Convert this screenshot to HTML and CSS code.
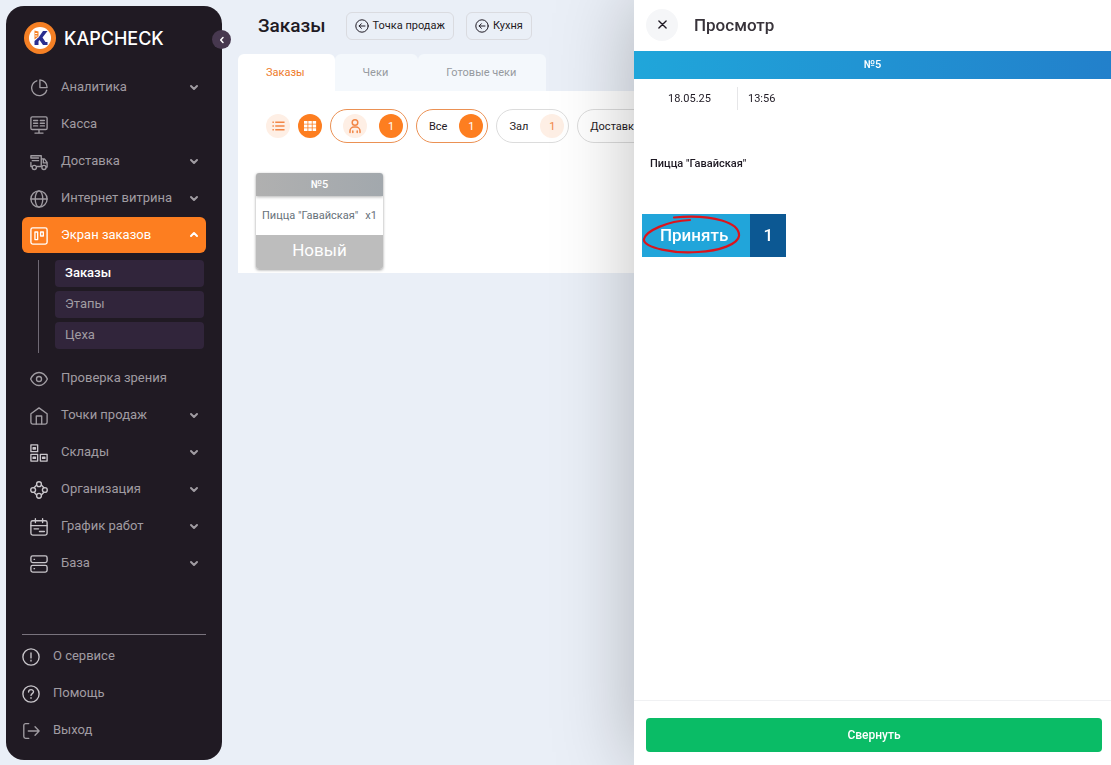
FILE: index.html
```html
<!DOCTYPE html>
<html lang="ru">
<head>
    <meta charset="UTF-8">
    <meta name="viewport" content="width=device-width, initial-scale=1.0">
    <title>Заказы - KAPCHECK</title>
    <link rel="stylesheet" href="styles.css">
</head>
<body>
    <svg class="sprite" aria-hidden="true">
        <symbol id="chevron" viewBox="0 0 10 10"><path d="M2 4l3 3 3-3"/></symbol>
        <symbol id="back" viewBox="0 0 14 14"><circle cx="7" cy="7" r="6.2"/><path d="M10 7H4.2M6.4 4.7L4.1 7l2.3 2.3"/></symbol>
    </svg>

    <div class="layout">
        <aside class="sidebar">
            <a class="logo" href="#">
                <svg class="logo-mark" viewBox="0 0 32 32">
                    <circle cx="16" cy="16" r="16" fill="#f58025"/>
                    <circle cx="16" cy="16" r="11" fill="#fff"/>
                    <path d="M10.500 8.500l4 1v5l-4 3z" fill="#f58025"/>
                    <path d="M11.500 11.500h1.500M11.500 14h1.500" stroke="#fff" stroke-width="1"/>
                    <path d="M10.500 19l4-3.500V23h-4z" fill="#2b2f8f"/>
                    <path d="M13.500 17l5.500-8h4.500l-5 6.500 3 4.500h2v3h-4.500l-3.500-5-2 2z" fill="#2b2f8f"/>
                </svg>
                <span>KAPCHECK</span>
            </a>
            <button class="collapse" type="button" aria-label="Свернуть меню">
                <svg viewBox="0 0 10 10"><path d="M6 2.500L3.700 5 6 7.500"/></svg>
            </button>

            <nav class="menu">
                <a class="menu-item" href="#">
                    <svg class="icon" viewBox="0 0 20 20"><path d="M7.500 2A8.500 8.500 0 1 0 18.500 12.500"/><path d="M11 1v8.500h8A8.500 8.500 0 0 0 11 1z"/></svg>
                    <span>Аналитика</span>
                    <svg class="chevron"><use href="#chevron"/></svg>
                </a>
                <a class="menu-item" href="#">
                    <svg class="icon" viewBox="0 0 20 20"><rect x="1" y="1" width="18" height="14" rx="1.500"/><path d="M10 15v3.500M5.500 19h9M4 5h4.500M4 8h4.500M4 11h4.500M11.500 5H16M11.500 8H16M11.500 11H16"/></svg>
                    <span>Касса</span>
                </a>
                <a class="menu-item" href="#">
                    <svg class="icon" viewBox="0 0 20 20"><path d="M1 5.500V3h11.500v12H7.500M1 10.500v4.500h1.500M12.500 6.500H16l3 4V15.500h-1M1 5.500h8.500M2.500 8.500h7M14.800 7v4H19"/><circle cx="4.800" cy="16" r="2.300"/><circle cx="15.500" cy="16" r="2.300"/></svg>
                    <span>Доставка</span>
                    <svg class="chevron"><use href="#chevron"/></svg>
                </a>
                <a class="menu-item" href="#">
                    <svg class="icon" viewBox="0 0 20 20"><circle cx="10" cy="10" r="9"/><ellipse cx="10" cy="10" rx="4.200" ry="9"/><path d="M1 10h18"/></svg>
                    <span>Интернет витрина</span>
                    <svg class="chevron"><use href="#chevron"/></svg>
                </a>
                <a class="menu-item active" href="#">
                    <svg class="icon" viewBox="0 0 20 20"><rect x="1" y="1" width="18" height="18" rx="2"/><rect x="5.500" y="5.500" width="3" height="8.500"/><rect x="11.800" y="5.500" width="3" height="4.500"/></svg>
                    <span>Экран заказов</span>
                    <svg class="chevron"><use href="#chevron"/></svg>
                </a>
                <div class="submenu">
                    <a class="current" href="#">Заказы</a>
                    <a href="#">Этапы</a>
                    <a href="#">Цеха</a>
                </div>
                <a class="menu-item" href="#">
                    <svg class="icon" viewBox="0 0 20 20"><path d="M.7 10C3 5 6.300 2.800 10 2.800s7 2.200 9.300 7.200c-2.300 5-5.600 7.200-9.300 7.200S3 15 .7 10z"/><circle cx="10" cy="10" r="2.800"/></svg>
                    <span>Проверка зрения</span>
                </a>
                <a class="menu-item" href="#">
                    <svg class="icon" viewBox="0 0 20 20"><path d="M1 7.500L10 1l9 6.500V17a2 2 0 0 1-2 2H3a2 2 0 0 1-2-2z"/><path d="M7 19v-9h6v9"/></svg>
                    <span>Точки продаж</span>
                    <svg class="chevron"><use href="#chevron"/></svg>
                </a>
                <a class="menu-item bright" href="#">
                    <svg class="icon" viewBox="0 0 20 20"><path d="M1 1h7.500v7.500H1zM1 11.500h7.500V19H1zM11.500 11.500H19V19h-7.500z"/><path d="M3.500 4h2.500v1.500H3.500zM3.500 14.500h2.500V16H3.500zM14 14.500h2.500V16H14z"/></svg>
                    <span>Склады</span>
                    <svg class="chevron"><use href="#chevron"/></svg>
                </a>
                <a class="menu-item bright" href="#">
                    <svg class="icon" viewBox="0 0 20 20"><circle cx="10" cy="3.500" r="2.700"/><circle cx="3.500" cy="10" r="2.700"/><circle cx="16.500" cy="10" r="2.700"/><circle cx="10" cy="16.500" r="2.700"/><path d="M7.400 4.500L4.500 7.400M12.600 4.500l2.900 2.900M7.400 15.500l-2.900-2.900M12.600 15.500l2.900-2.900"/></svg>
                    <span>Организация</span>
                    <svg class="chevron"><use href="#chevron"/></svg>
                </a>
                <a class="menu-item bright" href="#">
                    <svg class="icon" viewBox="0 0 20 20"><rect x="1" y="3" width="18" height="16" rx="2"/><path d="M1 8.500h18M6 .8v4.200M14 .8v4.200M4.500 12h5M10.500 15H16"/></svg>
                    <span>График работ</span>
                    <svg class="chevron"><use href="#chevron"/></svg>
                </a>
                <a class="menu-item bright" href="#">
                    <svg class="icon" viewBox="0 0 20 20"><rect x="1" y="1" width="18" height="7.500" rx="2"/><rect x="1" y="11.500" width="18" height="7.500" rx="2"/><path d="M4.500 4.800H5M4.500 15.200H5"/></svg>
                    <span>База</span>
                    <svg class="chevron"><use href="#chevron"/></svg>
                </a>
            </nav>

            <div class="menu-bottom">
                <a class="menu-item bright" href="#">
                    <svg class="icon" viewBox="0 0 20 20"><circle cx="10" cy="10" r="9"/><path d="M10 5.500v5.500M10 13.500v1"/></svg>
                    <span>О сервисе</span>
                </a>
                <a class="menu-item bright" href="#">
                    <svg class="icon" viewBox="0 0 20 20"><circle cx="10" cy="10" r="9"/><path d="M7.300 7.800c0-3.700 5.600-3.500 5.500-.2 0 2-2.800 2-2.800 4M10 14v.8"/></svg>
                    <span>Помощь</span>
                </a>
                <a class="menu-item" href="#">
                    <svg class="icon" viewBox="0 0 20 20"><path d="M7.500 1.800H4a2 2 0 0 0-2 2v12.400a2 2 0 0 0 2 2h3.500M7 10h12M14.500 5.300L19 10l-4.500 4.700"/></svg>
                    <span>Выход</span>
                </a>
            </div>
        </aside>

        <main class="content">
            <header class="page-header">
                <h1>Заказы</h1>
                <button class="btn-outline" type="button"><svg><use href="#back"/></svg>Точка продаж</button>
                <button class="btn-outline" type="button"><svg><use href="#back"/></svg>Кухня</button>
            </header>

            <div class="tabs">
                <button class="tab tab-active" type="button">Заказы</button>
                <button class="tab" type="button">Чеки</button>
                <button class="tab" type="button">Готовые чеки</button>
            </div>

            <section class="orders">
                <div class="filters">
                    <button class="round" type="button" aria-label="Список">
                        <svg class="lines" viewBox="0 0 14 14"><path d="M.5 3H2M.5 7H2M.5 11H2M3.500 3h10M3.500 7h10M3.500 11h10"/></svg>
                    </button>
                    <button class="round round-active" type="button" aria-label="Плитка">
                        <svg class="filled" viewBox="0 0 14 14"><path d="M1 2h3.500v2.800H1zM5.300 2h3.500v2.800H5.300zM9.600 2h3.500v2.800H9.600zM1 5.600h3.500v2.800H1zM5.300 5.600h3.500v2.800H5.300zM9.600 5.600h3.500v2.800H9.600zM1 9.200h3.500V12H1zM5.300 9.200h3.500V12H5.300zM9.600 9.200h3.500V12H9.600z"/></svg>
                    </button>
                    <button class="pill pill-active" type="button" aria-label="Мои заказы">
                        <span class="round">
                            <svg viewBox="0 0 14 16"><circle cx="7" cy="4.500" r="2.800"/><path d="M2 14.500V13a4 4 0 0 1 4-4h2a4 4 0 0 1 4 4v1.500M4.800 14.500V13M9.200 14.500V13"/></svg>
                        </span>
                        <span class="count">1</span>
                    </button>
                    <button class="pill pill-active" type="button">Все<span class="count">1</span></button>
                    <button class="pill" type="button">Зал<span class="count">1</span></button>
                    <button class="pill" type="button">Доставка<span class="count">1</span></button>
                </div>

                <article class="order-card">
                    <h2>№5</h2>
                    <p><span>Пицца "Гавайская"</span><span>x1</span></p>
                    <div class="order-status">Новый</div>
                </article>
            </section>
        </main>
    </div>

    <section class="drawer">
        <header class="drawer-header">
            <button class="close" type="button" aria-label="Закрыть">
                <svg viewBox="0 0 10 10"><path d="M1 1l8 8M9 1L1 9"/></svg>
            </button>
            <h2>Просмотр</h2>
        </header>
        <div class="drawer-number">№5</div>
        <div class="drawer-date">
            <span>18.05.25</span>
            <time>13:56</time>
        </div>
        <p class="drawer-item">Пицца "Гавайская"</p>
        <div class="actions">
            <button class="accept" type="button">Принять</button>
            <span class="amount">1</span>
            <!-- hand-drawn highlight around the accept button -->
            <svg class="highlight" viewBox="0 0 100 42" aria-hidden="true">
                <path d="M48 6C25 7 4 17 2 25c-2 9 32 15 54 13 22-1 40-8 41-16C98 9 72 0 32 3.500"/>
            </svg>
        </div>
        <footer class="drawer-footer">
            <button class="submit" type="button">Свернуть</button>
        </footer>
    </section>
</body>
</html>
```
FILE: styles.css
```css
* {
    box-sizing: border-box;
}

body {
    font-family: Roboto, "Noto Sans", sans-serif;
    font-size: 11px;
    color: #1f1a24;
    background-color: #eaeff7;
    margin: 0;
    height: 100vh;
    overflow: hidden;
}

h1,
h2,
p {
    margin: 0;
}

a {
    color: inherit;
    text-decoration: none;
}

button {
    font: inherit;
    color: inherit;
    border: none;
    background: none;
    padding: 0;
    cursor: pointer;
}

svg {
    display: block;
    flex: none;
    fill: none;
    stroke: currentColor;
    stroke-width: 1.5;
    stroke-linecap: round;
    stroke-linejoin: round;
}

.sprite {
    position: absolute;
    width: 0;
    height: 0;
}

.layout {
    display: flex;
    height: 100%;
}

/* Sidebar */
.sidebar {
    position: relative;
    display: flex;
    flex-direction: column;
    flex: none;
    width: 216px;
    margin: 6px 0 5px 6px;
    padding: 16px 16px 12px;
    border-radius: 18px;
    background-color: #201a23;
    color: #a09ca2;
}

.logo {
    display: flex;
    align-items: center;
    gap: 8px;
    padding-left: 2px;
    color: #fff;
    font-family: Inter, sans-serif;
    font-size: 18px;
    font-weight: 500;
}

.logo-mark {
    width: 32px;
    height: 32px;
    stroke: none;
}

.collapse {
    position: absolute;
    top: 24px;
    right: -9px;
    display: grid;
    place-items: center;
    width: 19px;
    height: 19px;
    border-radius: 50%;
    background-color: #47384f;
    color: #fff;
}

.collapse svg {
    width: 10px;
    height: 10px;
}

.menu {
    display: flex;
    flex-direction: column;
    gap: 1px;
    margin-top: 15px;
}

.menu-item {
    display: flex;
    align-items: center;
    gap: 13px;
    height: 36px;
    padding: 0 7px 0 8px;
    border-radius: 6px;
    font-size: 13px;
}

.menu-item span {
    flex: 1;
    padding-bottom: 1px;
}

.icon {
    width: 18px;
    height: 18px;
    margin-top: 2px;
}

.bright .icon {
    color: #c9c6cb;
}

.chevron {
    width: 10px;
    height: 10px;
    stroke-width: 2;
}

.active {
    background-color: #fd7e20;
    color: #fff;
}

.active .chevron {
    transform: rotate(180deg);
}

.submenu {
    display: flex;
    flex-direction: column;
    gap: 4px;
    margin: 6px 2px 6px 16px;
    padding: 0 0 4px 16px;
    border-left: 1px solid #6f6974;
}

.submenu a {
    height: 27px;
    padding-left: 10px;
    border-radius: 4px;
    background-color: #31253b;
    font-size: 13px;
    line-height: 26px;
}

.submenu .current {
    color: #fff;
    font-weight: 500;
}

.menu-bottom {
    display: flex;
    flex-direction: column;
    gap: 1px;
    margin-top: auto;
    padding-top: 3px;
    border-top: 1px solid #79737d;
}

.menu-bottom .menu-item {
    padding-left: 0;
}

/* Page */
.content {
    flex: 1;
    min-width: 0;
    padding: 12px 16px 0;
}

.page-header {
    display: flex;
    align-items: center;
    gap: 12px;
    padding-left: 20px;
}

.page-header h1 {
    margin-right: 8px;
    padding-bottom: 1px;
    font-size: 19px;
    font-weight: 500;
}

.btn-outline {
    display: flex;
    align-items: center;
    gap: 4px;
    height: 28px;
    padding: 0 8px 1px;
    border: 1px solid #dadbe0;
    border-radius: 6px;
}

.btn-outline svg {
    width: 14px;
    height: 14px;
    stroke-width: 1;
}

.tabs {
    display: flex;
    margin-top: 14px;
}

.tab {
    height: 37px;
    padding: 0 30px 0 28px;
    border-radius: 6px 6px 0 0;
    background-color: #f4f8fc;
    color: #969a9f;
}

.tab-active {
    background-color: #fff;
    color: #ee7a2b;
}

.orders {
    padding: 18px 18px 4px;
    background-color: #fff;
}

.filters {
    display: flex;
    align-items: center;
    gap: 8px;
    padding-left: 10px;
    overflow: hidden;
}

.round,
.count {
    display: grid;
    place-items: center;
    flex: none;
    width: 24px;
    height: 24px;
    border-radius: 50%;
    background-color: #feefe5;
    color: #f28646;
}

.round svg {
    width: 14px;
    height: 16px;
}

.round .lines {
    width: 13px;
    stroke-linecap: butt;
}

.round .filled {
    fill: currentColor;
    stroke: none;
}

.round-active,
.pill-active .count {
    background-color: #fd7e20;
    color: #fff;
}

.pill {
    display: flex;
    align-items: center;
    gap: 12px;
    height: 34px;
    padding: 0 4px 0 12px;
    border: 1px solid #dcdcdc;
    border-radius: 17px;
}

.pill-active {
    border-color: #eb9154;
}

.order-card {
    width: 127px;
    margin-top: 30px;
    border-radius: 3px;
    background-color: #fff;
    box-shadow: 0 1px 3px rgba(0, 0, 0, 0.4);
    overflow: hidden;
}

.order-card h2 {
    background: linear-gradient(90deg, #b0b0b0, #a2a8ad);
    box-shadow: 0 1px 3px rgba(0, 0, 0, 0.3);
    color: #fff;
    font-size: 11px;
    font-weight: 500;
    line-height: 23px;
    text-align: center;
}

.order-card p {
    display: flex;
    justify-content: space-between;
    padding: 0 6px;
    color: #67717a;
    line-height: 39px;
    white-space: nowrap;
}

.order-status {
    background-color: #bdbdbd;
    color: #fff;
    font-size: 17px;
    line-height: 30px;
    padding-bottom: 4px;
    text-align: center;
}

/* Order preview */
.drawer {
    position: fixed;
    top: 0;
    right: 0;
    bottom: 0;
    display: flex;
    flex-direction: column;
    width: 477px;
    max-width: 100%;
    background-color: #fff;
    box-shadow: 0 0 75px rgba(0, 0, 0, 0.26);
}

.drawer-header {
    display: flex;
    align-items: center;
    gap: 16px;
    height: 51px;
    padding: 0 12px 2px;
}

.drawer-header h2 {
    color: #38333a;
    font-size: 17px;
    font-weight: 500;
}

.close {
    display: grid;
    place-items: center;
    width: 32px;
    height: 32px;
    border-radius: 50%;
    background-color: #f5f6f8;
}

.close svg {
    width: 9px;
    height: 9px;
}

.drawer-number {
    background: linear-gradient(90deg, #20a6da, #2280cb);
    color: #fff;
    font-weight: 500;
    line-height: 28px;
    text-align: center;
}

.drawer-date {
    display: flex;
    margin-top: 8px;
    line-height: 23px;
}

.drawer-date span {
    width: 104px;
    padding-left: 34px;
    border-right: 1px solid #e6e6e8;
}

.drawer-date time {
    padding-left: 10px;
}

.drawer-item {
    margin: 44px 16px 40px;
    font-weight: 500;
    line-height: 20px;
}

.actions {
    position: relative;
    display: flex;
    margin-left: 8px;
    color: #fff;
    font-size: 17px;
    font-weight: 500;
    line-height: 43px;
}

.accept {
    padding: 0 22px 0 18px;
    background-color: #21a5da;
}

.amount {
    width: 36px;
    background-color: #0c5893;
    text-align: center;
}

.highlight {
    position: absolute;
    top: 0;
    left: 0;
    width: 100px;
    height: 42px;
    color: #dc141c;
    stroke-width: 2.2;
    pointer-events: none;
}

.drawer-footer {
    margin-top: auto;
    padding: 17px 9px 13px 12px;
    border-top: 1px solid #f0f1f3;
}

.submit {
    width: 100%;
    height: 34px;
    border-radius: 4px;
    background-color: #0abc66;
    color: #fff;
    font-size: 12px;
    font-weight: 500;
}
```
